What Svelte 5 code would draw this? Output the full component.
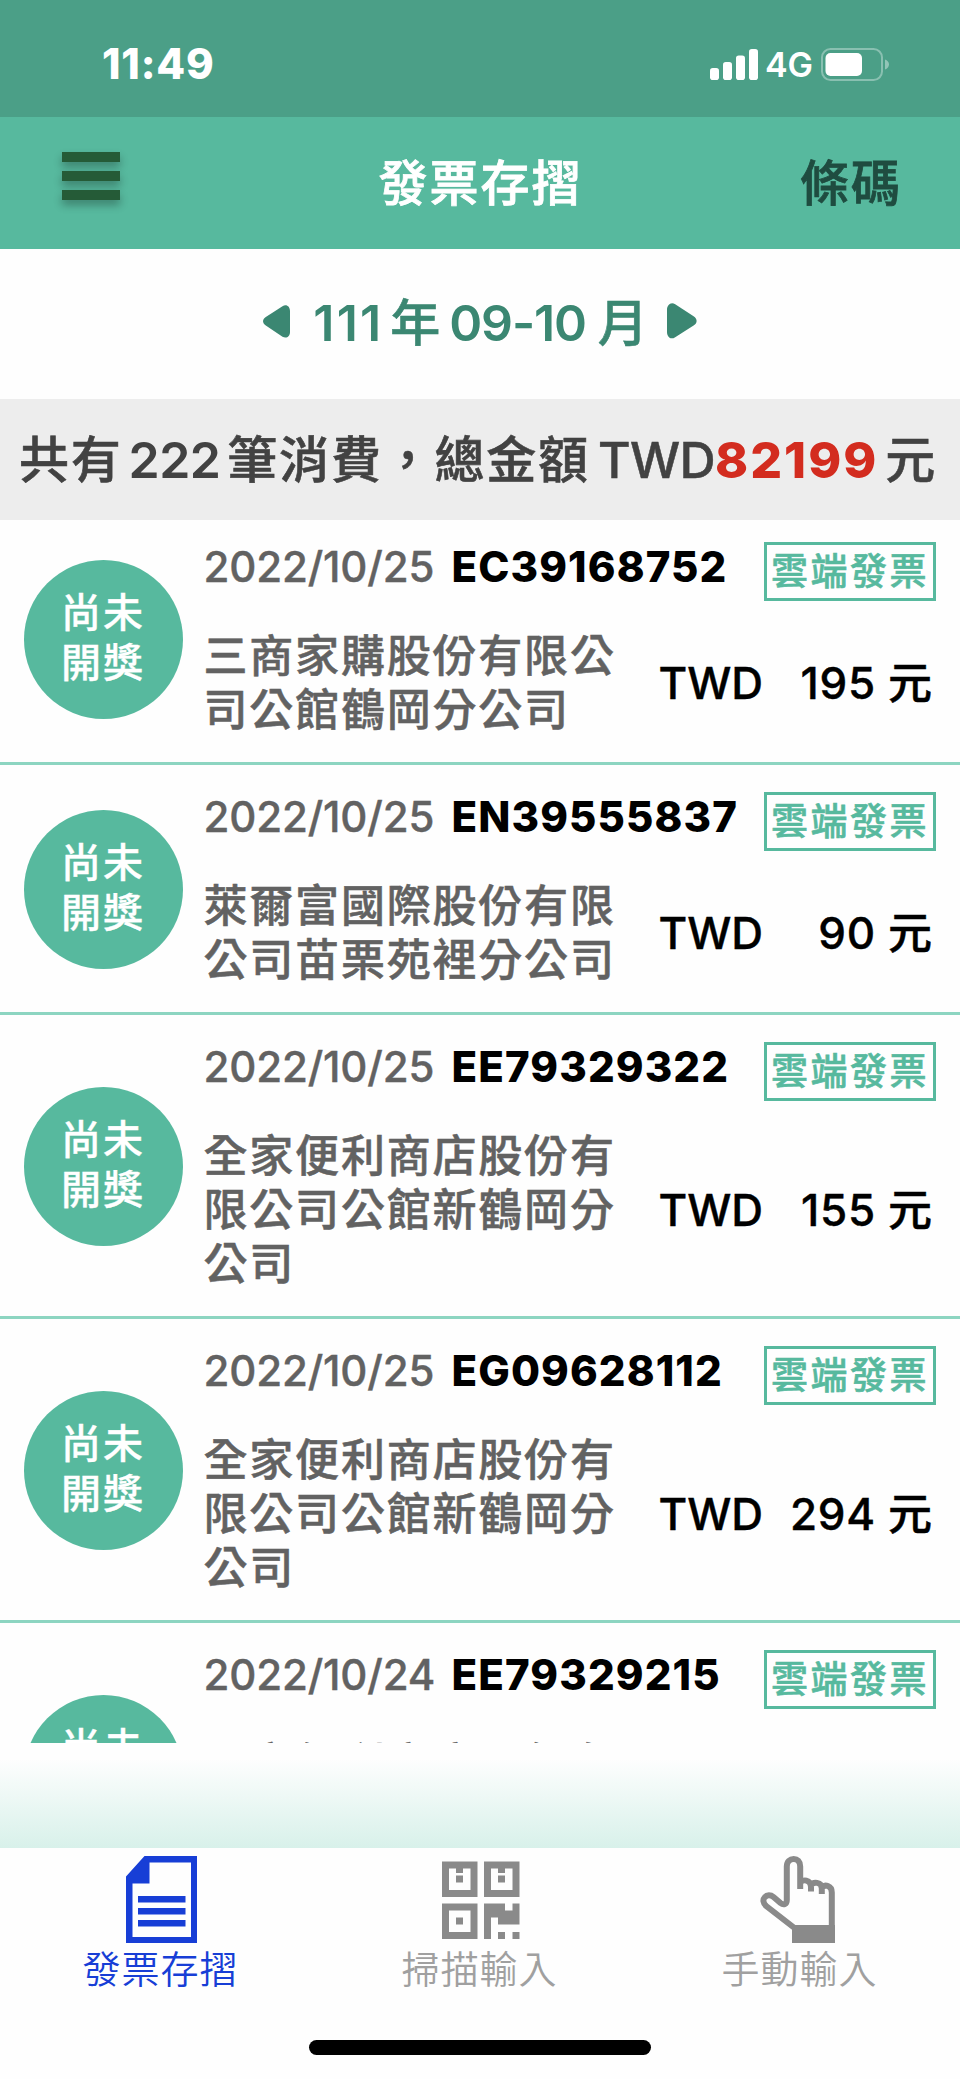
<script lang="ts">
	interface Invoice {
		date: string;
		number: string;
		seller: string[];
		amount: number;
	}

	const period = { year: '111', months: '09-10' };
	const summary = { count: 222, total: 82199 };

	const invoices: Invoice[] = [
		{
			date: '2022/10/25',
			number: 'EC39168752',
			seller: ['三商家購股份有限公', '司公館鶴岡分公司'],
			amount: 195
		},
		{
			date: '2022/10/25',
			number: 'EN39555837',
			seller: ['萊爾富國際股份有限', '公司苗栗苑裡分公司'],
			amount: 90
		},
		{
			date: '2022/10/25',
			number: 'EE79329322',
			seller: ['全家便利商店股份有', '限公司公館新鶴岡分', '公司'],
			amount: 155
		},
		{
			date: '2022/10/25',
			number: 'EG09628112',
			seller: ['全家便利商店股份有', '限公司公館新鶴岡分', '公司'],
			amount: 294
		},
		{
			date: '2022/10/24',
			number: 'EE79329215',
			seller: ['全家便利商店股份有', '限公司公館新鶴岡分', '公司'],
			amount: 79
		}
	];

	const tabs = [
		{ id: 'book', label: '發票存摺' },
		{ id: 'scan', label: '掃描輸入' },
		{ id: 'manual', label: '手動輸入' }
	];

	let activeTab = $state('book');
</script>

<div class="screen">
	<div class="status-bar">
		<span class="clock">11:49</span>
		<div class="status-icons">
			<svg class="signal" width="48" height="31" viewBox="0 0 48 31" fill="#fff">
				<rect x="0" y="19" width="9" height="12" rx="2.8" />
				<rect x="13" y="13" width="9" height="18" rx="2.8" />
				<rect x="26" y="6.5" width="9" height="24.5" rx="2.8" />
				<rect x="39" y="0" width="9" height="31" rx="2.8" />
			</svg>
			<span class="network">4G</span>
			<svg class="battery" width="68" height="33" viewBox="0 0 68 33">
				<rect x="1" y="1" width="60" height="31" rx="8.5" fill="none" stroke="#fff" stroke-opacity="0.35" stroke-width="2" />
				<rect x="4.5" y="5" width="36.5" height="23" rx="5" fill="#fff" />
				<path d="M64 11.5c2.4.9 4 2.7 4 5s-1.6 4.1-4 5z" fill="#fff" fill-opacity="0.4" />
			</svg>
		</div>
	</div>

	<header class="nav-bar">
		<button class="menu" aria-label="選單">
			<span></span>
			<span></span>
			<span></span>
		</button>
		<h1>發票存摺</h1>
		<button class="barcode">條碼</button>
	</header>

	<div class="period">
		<svg width="27" height="33" viewBox="0 0 27 33">
			<path d="M27 6v21c0 4.5-3.5 7-7.5 4.8L2.8 20.5c-3.7-2.5-3.7-6 0-8.500L19.5 1.2C23.5-1.2 27 1.5 27 6z" />
		</svg>
		<div class="period-text">
			<span class="year">{period.year}</span>
			<span class="cjk">年</span>
			<span class="months">{period.months}</span>
			<span class="cjk">月</span>
		</div>
		<svg width="30" height="36" viewBox="0 0 30 36">
			<path d="M0 7v22c0 5 3.8 8.2 8.2 5.2L26.6 22.5c4-2.6 4-6.6 0-9.300L8.2 1.3C3.8-1.6 0 2 0 7z" />
		</svg>
	</div>

	<div class="summary">
		<span class="cjk">共有</span>
		<span class="count">{summary.count}</span>
		<span class="cjk">筆消費，總金額</span>
		<span class="currency">TWD</span>
		<strong>{summary.total}</strong>
		<span class="cjk">元</span>
	</div>

	<main class="list">
		{#each invoices as invoice (invoice.number)}
			<article class="invoice">
				<div class="state">
					<span>尚未</span>
					<span>開獎</span>
				</div>
				<div class="body">
					<div class="head">
						<span class="date">{invoice.date}</span>
						<span class="number">{invoice.number}</span>
						<span class="badge">雲端發票</span>
					</div>
					<div class="detail">
						<div class="seller">
							{#each invoice.seller as line}
								<span>{line}</span>
							{/each}
						</div>
						<span class="twd">TWD</span>
						<span class="amount">{invoice.amount}</span>
						<span class="yuan">元</span>
					</div>
				</div>
			</article>
		{/each}
	</main>

	<div class="fade"></div>

	<nav class="tab-bar">
		{#each tabs as tab (tab.id)}
			<button class="tab" class:active={activeTab === tab.id} onclick={() => (activeTab = tab.id)}>
				{#if tab.id === 'book'}
					<svg width="71" height="87" viewBox="0 0 71 87">
						<path fill-rule="evenodd" d="M18.5 0H71v87H0V20.5zM23.5 6.5V27.500H6.5V81H65V6.5z" />
						<path d="M12 40h47.5v6.5H12zM12 52h47.5v6.5H12zM12 64h47.5v6.5H12z" />
					</svg>
				{:else if tab.id === 'scan'}
					<svg width="78" height="87" viewBox="0 -5.5 78 87">
						<path fill-rule="evenodd" d="M0 0h35.5v35.5H0zM7 7v21.5h21.5V7h-7.5v4.5h-7V7z" />
						<path d="M14 14h7v7h-7zM56 14h7v7h-7zM14 56h7v7h-7z" />
						<path fill-rule="evenodd" d="M42 0h35.5v35.5H42zM49 7v21.5h21.5V7H63v4.5h-7V7z" />
						<path fill-rule="evenodd" d="M0 42h35.5v35.5H0zM7 49v21.5h21.5V49z" />
						<path d="M42 42h21v7h7.5v-7h7v21H56v-7h-7v21.5h-7zM56 70.5h7v7h-7zM70.500 70.5h7v7h-7z" />
					</svg>
				{:else}
					<svg width="82" height="87" viewBox="0 0 82 87">
						<path
							class="outline"
							d="M34.5 72L6.2 50C3 47 2.6 43.5 4.8 41.2 7 38.6 10.7 38.7 13.5 41l7 6c3.2 2.6 6.3 1.2 6.3-3V10.5C26.8 5.5 30 3 33.7 3s6.5 2.5 6.5 7.5V33M40.2 27c2-4 10.8-4 10.8 4.5V35.5M51 29.5c2-4 10.8-4 10.8 3V38M61.8 31.5c3-3.5 10-2 10 5V72"
						/>
						<path d="M32 69h43v18H32z" />
					</svg>
				{/if}
				<span>{tab.label}</span>
			</button>
		{/each}
	</nav>

	<div class="home-indicator"><span></span></div>
</div>

<style>
	:global(body) {
		margin: 0;
		background: #fff;
	}

	.screen {
		display: flex;
		flex-direction: column;
		width: 960px;
		height: 2079px;
		overflow: hidden;
		background: #fefefe;
		font-family: Inter, 'Noto Sans CJK TC', sans-serif;
		font-weight: 500;
		white-space: nowrap;
	}

	button {
		padding: 0;
		border: 0;
		background: none;
		font: inherit;
		color: inherit;
	}

	/* Status bar */
	.status-bar {
		display: flex;
		flex: none;
		justify-content: space-between;
		align-items: center;
		box-sizing: border-box;
		height: 117px;
		padding: 11px 71px 0 102px;
		background: #4b9f87;
		color: #fff;
	}

	.clock {
		font-size: 42px;
		font-weight: 800;
		line-height: 50px;
		letter-spacing: 0.8px;
	}

	.status-icons {
		display: flex;
		align-items: center;
	}

	.network {
		margin: 2px 8px 0 7px;
		font-size: 34px;
		font-weight: 600;
		line-height: 40px;
	}

	/* Navigation bar */
	.nav-bar {
		display: grid;
		grid-template-columns: 1fr auto 1fr;
		flex: none;
		align-items: center;
		box-sizing: border-box;
		height: 132px;
		padding: 2px 58px 0 62px;
		background: #57b99e;
	}

	.menu {
		display: flex;
		flex-direction: column;
		gap: 9px;
		width: 58px;
		margin-top: -17px;
	}

	.menu span {
		height: 10px;
		background: #255b37;
		box-shadow: 0 5px 8px rgb(0 0 0 / 0.3);
	}

	h1,
	.barcode {
		margin: 0;
		font-size: 49px;
		font-weight: 500;
		line-height: 60px;
		letter-spacing: 2px;
		-webkit-text-stroke: 0.8px;
	}

	h1 {
		margin-left: -3px;
		color: #fff;
	}

	.barcode {
		justify-self: end;
		color: #1f4c40;
	}

	/* Period picker */
	.period {
		display: flex;
		flex: none;
		justify-content: space-between;
		align-items: center;
		box-sizing: border-box;
		height: 150px;
		padding: 0 263px;
		color: #3b8772;
		fill: #3b8772;
		font-size: 50px;
		line-height: 60px;
	}

	.period svg {
		margin-top: -6px;
	}

	.period-text {
		display: flex;
		align-items: baseline;
		margin-top: -3px;
		padding-left: 4px;
	}

	.period-text .cjk {
		-webkit-text-stroke: 0.6px;
	}

	.year {
		margin-right: 7px;
		font-weight: 600;
		letter-spacing: 2.2px;
	}

	.months {
		margin: 0 12px 0 9px;
		font-weight: 600;
		letter-spacing: -1.2px;
	}

	/* Summary strip */
	.summary {
		display: flex;
		flex: none;
		align-items: baseline;
		box-sizing: border-box;
		height: 121px;
		padding: 31px 0 0 19px;
		background: #ededed;
		color: #424242;
		font-size: 50px;
		line-height: 60px;
	}

	.summary .cjk {
		letter-spacing: 1.8px;
		-webkit-text-stroke: 0.6px;
	}

	.count {
		margin: 0 7px 0 6px;
		font-weight: 600;
		letter-spacing: -0.6px;
	}

	.currency {
		margin-left: 8px;
		letter-spacing: -0.6px;
		-webkit-text-stroke: 0.5px;
	}

	.summary strong {
		margin-right: 7px;
		color: #d32c1f;
		font-weight: 800;
		letter-spacing: 2px;
	}

	/* Invoice list, scrolled by a few pixels */
	.list {
		flex: none;
		height: 1223px;
		overflow: hidden;
	}

	.invoice {
		display: flex;
		align-items: center;
		gap: 20.5px;
		box-sizing: border-box;
		padding: 27px 24px 19px;
		border-bottom: 3px solid #8dd5c1;
	}

	.invoice:first-child {
		margin-top: -5px;
	}

	.state {
		display: flex;
		flex: none;
		flex-direction: column;
		justify-content: center;
		align-items: center;
		box-sizing: border-box;
		width: 159px;
		height: 159px;
		margin-top: -6px;
		padding: 0 1px 3px 0;
		border-radius: 50%;
		background: #57b99e;
		color: #fff;
		font-size: 40px;
		line-height: 50px;
		letter-spacing: 2px;
		-webkit-text-stroke: 0.3px;
	}

	.body {
		flex: 1;
	}

	.head {
		display: flex;
		height: 59px;
	}

	.date {
		width: 248px;
		color: #626262;
		font-size: 42px;
		line-height: 50px;
		letter-spacing: -0.15px;
		-webkit-text-stroke: 0.4px;
	}

	.number {
		flex: 1;
		color: #000;
		font-size: 42px;
		font-weight: 800;
		line-height: 50px;
		letter-spacing: 1.1px;
	}

	.badge {
		box-sizing: border-box;
		width: 172px;
		height: 59px;
		padding-left: 4px;
		border: 3px solid #57b99e;
		color: #57b99e;
		font-size: 37px;
		line-height: 53px;
		letter-spacing: 2.5px;
		-webkit-text-stroke: 0.6px;
	}

	.detail {
		display: flex;
		align-items: center;
		padding: 28px 4px 6px 0;
		color: #000;
		font-size: 44px;
		line-height: 54px;
	}

	.seller {
		display: flex;
		flex-direction: column;
		width: 455px;
		color: #626262;
		letter-spacing: 1.8px;
		-webkit-text-stroke: 0.5px;
	}

	.twd {
		-webkit-text-stroke: 0.4px;
	}

	.amount {
		flex: 1;
		letter-spacing: 0.8px;
		text-align: right;
		-webkit-text-stroke: 0.4px;
	}

	.yuan {
		margin-left: 12px;
		-webkit-text-stroke: 0.5px;
	}

	/* Bottom */
	.fade {
		flex: none;
		height: 105px;
		background: linear-gradient(#fefefe 15%, #d8f1ea);
	}

	.tab-bar {
		display: grid;
		grid-template-columns: repeat(3, 1fr);
		flex: none;
		height: 150px;
	}

	.tab {
		display: flex;
		flex-direction: column;
		align-items: center;
		padding: 8px 0 0 1px;
		color: #a0a0a0;
		fill: #8a8a8a;
		font-size: 38px;
		font-weight: 350;
		line-height: 52px;
		letter-spacing: 1px;
	}

	.tab span {
		margin-left: -2px;
	}

	.tab.active {
		padding-left: 3px;
		color: #173ed6;
		fill: #173ed6;
	}

	.outline {
		fill: none;
		stroke: #8a8a8a;
		stroke-width: 6;
	}

	.home-indicator {
		display: flex;
		justify-content: center;
		padding-top: 42px;
	}

	.home-indicator span {
		width: 342px;
		height: 15px;
		border-radius: 8px;
		background: #000;
	}
</style>
